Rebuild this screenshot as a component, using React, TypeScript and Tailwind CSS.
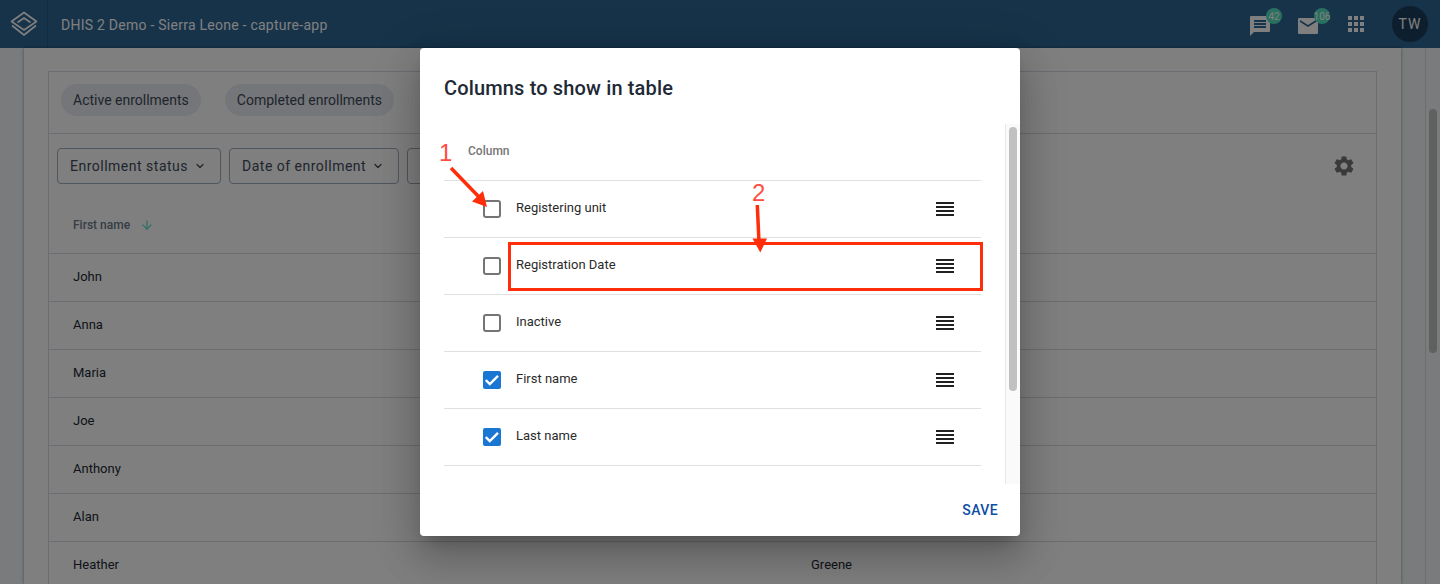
import React from "react";
import { ChevronDown, ArrowDown } from "lucide-react";

const font = "font-['Roboto',sans-serif]";
const rows = [
  ["John", ""],
  ["Anna", ""],
  ["Maria", ""],
  ["Joe", ""],
  ["Anthony", ""],
  ["Alan", ""],
  ["Heather", "Greene"],
];
const cols: [string, boolean][] = [
  ["Registering unit", false],
  ["Registration Date", false],
  ["Inactive", false],
  ["First name", true],
  ["Last name", true],
];

function Chip({ children }: { children: React.ReactNode }) {
  return (
    <span className="flex h-8 items-center rounded-2xl bg-[#e8edf2] px-3 text-sm text-[#404b5a]">{children}</span>
  );
}
function Filter({ label, w }: { label: string; w: string }) {
  return (
    <div className={`flex h-9 shrink-0 items-center gap-[6px] rounded border border-[#a0adba] pl-3 pr-2 text-sm tracking-[0.5px] text-[#404b5a] ${w}`}>
      <span>{label}</span>
      <ChevronDown size={12} strokeWidth={2.5} />
    </div>
  );
}
function Logo() {
  return (
    <svg width="28" height="26" viewBox="0 0 28 26" fill="none" stroke="#fff" strokeWidth="1.6" strokeLinejoin="round">
      <path d="M14 1.5 L26.5 10.5 L14 19 L1.5 10.5 Z" />
      <path d="M7.5 11.5 L14 7 L20.5 11.5" />
      <path d="M2 14.5 L14 24 L26 14.5" />
    </svg>
  );
}
function Handle() {
  return (
    <svg width="18" height="15" viewBox="0 0 18 15" className="shrink-0" fill="#212121">
      <rect y="0" width="18" height="2" />
      <rect y="4" width="18" height="2" />
      <rect y="8" width="18" height="2" />
      <rect y="12" width="18" height="2" />
    </svg>
  );
}

export default function App() {
  return (
    <div className={`relative h-[584px] w-[1440px] overflow-hidden bg-[#f4f6f8] ${font}`}>
      {/* header */}
      <header className="flex h-12 items-center bg-[#2c6693] text-white">
        <div className="flex h-12 w-12 items-center justify-center border-r border-[#26597f]"><Logo /></div>
        <span className="relative top-[1px] ml-[13px] text-sm tracking-[0.25px]">DHIS 2 Demo - Sierra Leone - capture-app</span>
        <div className="ml-auto flex items-center">
          <div className="relative mr-6 h-6 w-6">
            <svg width="24" height="24" viewBox="0 0 24 24" fill="#fff" fillRule="evenodd">
              <path d="M21 4H3a1 1 0 0 0-1 1v19l4-4h15a1 1 0 0 0 1-1V5a1 1 0 0 0-1-1zM6 8h12v2H6zm0 3h12v2H6zm0 3h12v2H6z" />
            </svg>
            <span className="absolute -right-[10px] -top-[4px] flex h-4 w-4 items-center justify-center rounded-full bg-[#54e0c0] text-[10px]">42</span>
          </div>
          <div className="relative mr-7 h-6 w-6">
            <svg width="24" height="24" viewBox="0 0 24 24" fill="#fff" fillRule="evenodd">
              <path d="M21 6H3a1 1 0 0 0-1 1v14a1 1 0 0 0 1 1h18a1 1 0 0 0 1-1V7a1 1 0 0 0-1-1zm-1 4-8 5-8-5V8l8 5 8-5z" />
            </svg>
            <span className="absolute -right-[10px] -top-[4px] flex h-4 w-4 items-center justify-center rounded-full bg-[#54e0c0] text-[10px]">106</span>
          </div>
          <svg width="16" height="16" viewBox="0 0 16 16" fill="#fff" className="mr-7">
            {[0, 6, 12].flatMap((x) => [0, 6, 12].map((y) => <rect key={`${x}-${y}`} x={x} y={y} width="4" height="4" />))}
          </svg>
          <div className="mr-3 flex h-9 w-9 items-center justify-center rounded-full bg-[#1b3f5c] text-sm tracking-[1px]">TW</div>
        </div>
      </header>

      {/* page */}
      <div className="flex h-[536px]">
        <div className="ml-6 h-full w-[1377px] shrink-0 bg-white pl-6 pt-[23px] shadow-[0_0_3px_rgba(0,0,0,0.4)]">
          <div className="h-[600px] w-[1329px] border border-[#d5dde5]">
            <div className="flex h-[62px] items-start gap-6 border-b border-[#d5dde5] pl-3 pt-3">
              <Chip>Active enrollments</Chip>
              <Chip>Completed enrollments</Chip>
            </div>
            <div className="relative flex h-[50px] items-end gap-2 pl-2">
              <Filter label="Enrollment status" w="w-[164px]" />
              <Filter label="Date of enrollment" w="w-[170px]" />
              <div className="h-9 w-24 rounded border border-[#a0adba]" />
              <svg className="absolute right-5 top-5" width="24" height="24" viewBox="0 0 24 24" fill="#757575">
                <path d="M19.14 12.94c.04-.3.06-.61.06-.94 0-.32-.02-.64-.07-.94l2.03-1.58a.49.49 0 0 0 .12-.61l-1.92-3.32a.488.488 0 0 0-.59-.22l-2.39.96c-.5-.38-1.03-.7-1.62-.94l-.36-2.54a.484.484 0 0 0-.48-.41h-3.84c-.24 0-.43.17-.47.41l-.36 2.54c-.59.24-1.13.57-1.62.94l-2.39-.96c-.22-.08-.47 0-.59.22L2.74 8.87c-.12.21-.08.47.12.61l2.03 1.58c-.05.3-.09.63-.09.94s.02.64.07.94l-2.03 1.58a.49.49 0 0 0-.12.61l1.92 3.32c.12.22.37.29.59.22l2.39-.96c.5.38 1.03.7 1.62.94l.36 2.54c.05.24.24.41.48.41h3.84c.24 0 .44-.17.47-.41l.36-2.54c.59-.24 1.13-.56 1.62-.94l2.39.96c.22.08.47 0 .59-.22l1.92-3.32c.12-.22.07-.47-.12-.61l-2.01-1.58zM12 15.6c-1.98 0-3.6-1.62-3.6-3.6s1.62-3.6 3.6-3.6 3.6 1.62 3.6 3.6-1.62 3.6-3.6 3.6z" />
              </svg>
            </div>
            <div className="flex h-[70px] items-center gap-[10px] border-b border-[#d5dde5] pl-6 pt-[13px] text-xs font-medium text-[#6e7a8a]">
              First name <ArrowDown size={14} className="text-[#54e0c0]" />
            </div>
            {rows.map(([a, b]) => (
              <div key={a} className="flex h-12 items-center border-b border-[#d5dde5] pb-[2px] pl-6 text-[13px] text-[#212934]">
                <span className="w-[738px]">{a}</span>
                <span>{b}</span>
              </div>
            ))}
          </div>
        </div>
        <div className="ml-6 flex h-full w-[15px] justify-end border-l border-[#dcdcdc] bg-[#f4f6f8] pr-[3px]">
          <div className="mt-[61px] h-[244px] w-2 rounded-full bg-[#c1c1c1]" />
        </div>
      </div>

      {/* scrim */}
      <div className="absolute inset-0 bg-black/50" />

      {/* modal */}
      <div className="absolute left-[420px] top-12 flex h-[488px] w-[600px] flex-col rounded bg-white shadow-[0_11px_15px_-7px_rgba(0,0,0,0.2),0_24px_38px_3px_rgba(0,0,0,0.14),0_9px_46px_8px_rgba(0,0,0,0.12)]">
        <h2 className="flex h-[76px] shrink-0 items-center pl-6 pt-1 text-xl font-medium tracking-[0.15px] text-[#212934]">Columns to show in table</h2>
        <div className="flex h-[360px] shrink-0">
          <div className="w-[585px] px-6">
            <div className="flex h-[57px] items-center border-b border-[#e0e0e0] pl-6 text-xs font-medium text-[#757575]">
              <span className="relative -top-[1px]">Column</span>
            </div>
            {cols.map(([label, checked]) => (
              <div key={label} className="flex h-[57px] items-center border-b border-[#e0e0e0] pl-[39px] pr-[27px] text-[13px] text-[#2b2b2b]">
                {checked ? (
                  <span className="flex h-[18px] w-[18px] items-center justify-center rounded-[2px] bg-[#1976d2]">
                    <svg width="14" height="14" viewBox="0 0 14 14" fill="none" stroke="#fff" strokeWidth="2.4"><path d="M0.8 7 L4.8 11 L13 2.8" /></svg>
                  </span>
                ) : (
                  <span className="h-[18px] w-[18px] rounded-[3px] border-2 border-[#757575]" />
                )}
                <span className="relative -top-[1px] ml-[15px]">{label}</span>
                <span className="ml-auto"><Handle /></span>
              </div>
            ))}
          </div>
          <div className="flex w-[15px] justify-center border-l border-[#e8e8e8] bg-[#fafafa]">
            <div className="mt-[3px] h-[264px] w-2 rounded-full bg-[#c1c1c1]" />
          </div>
        </div>
        <div className="flex flex-1 items-center justify-end pr-[22px]">
          <span className="text-sm font-medium tracking-[0.4px] text-[#0d4ea6]">SAVE</span>
        </div>
      </div>

      {/* annotations */}
      <div className="absolute left-[508px] top-[242px] h-[49px] w-[475px] border-[3px] border-[#ff2d0a]" />
      <span className="absolute left-[439px] top-[141px] font-['Liberation_Sans',sans-serif] text-2xl leading-6 text-[#ff4d3f]">1</span>
      <span className="absolute left-[752px] top-[181px] font-['Liberation_Sans',sans-serif] text-2xl leading-6 text-[#ff4d3f]">2</span>
      <svg className="absolute left-0 top-0" width="1440" height="584" fill="#ff2d0a" stroke="none">
        <path d="M451 168 L479 197" stroke="#ff2d0a" strokeWidth="3.5" />
        <path d="M472 201.5 L487 207 L483 191 Z" />
        <path d="M757.3 205 L759 242" stroke="#ff2d0a" strokeWidth="3.5" />
        <path d="M752.5 238.5 L767 238.5 L760.3 252.5 Z" />
      </svg>
    </div>
  );
}
